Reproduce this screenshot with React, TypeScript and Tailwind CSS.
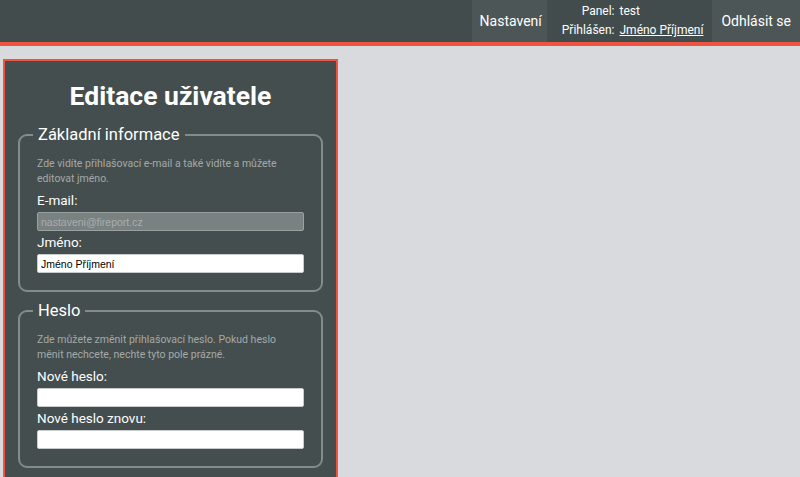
import React from "react";

const font = { fontFamily: "Roboto, 'Noto Sans', sans-serif" };
const inputFont = { fontFamily: "'Liberation Sans', Arial, sans-serif" };

function Field({ label, value, disabled, first }: { label: string; value?: string; disabled?: boolean; first?: boolean }) {
  return (
    <div className="flex flex-col">
      <label className={"text-[13.5px] leading-[16px] text-white " + (first ? "mt-[6px]" : "mt-[3px]")}>{label}</label>
      <input
        readOnly
        disabled={disabled}
        value={value ?? ""}
        style={inputFont}
        className={
          "mt-[4px] h-[19px] w-full rounded-[2px] px-[3px] text-[10.5px] outline-none " +
          (disabled
            ? "bg-[#7a8181] border border-[#9aa1a1] text-[#a9aeae]"
            : "bg-white border border-[#c9cccc] text-black")
        }
      />
    </div>
  );
}

function Section({ title, desc, children }: { title: string; desc: React.ReactNode; children: React.ReactNode }) {
  return (
    <fieldset className="border-2 border-[#838b8b] rounded-[9px] px-[17px] pb-[17px]">
      <legend className="ml-[-4px] px-[5px] text-[16.5px] leading-[22px] text-white">{title}</legend>
      <p className="mt-[10px] text-[10.5px] leading-[15px] text-[#a4a9a9]">{desc}</p>
      {children}
    </fieldset>
  );
}

export default function App() {
  return (
    <div className="min-h-[477px] w-[800px] bg-[#d9dadd]" style={font}>
      <header className="h-[46px] bg-[#434c4c] border-b-4 border-[#ef5440] flex justify-end">
        <div className="h-[42px] bg-[#4c5656] pl-[8px] pr-[5px] flex items-center text-white text-[14px] ml-auto">
          Nastavení
        </div>
        <div className="h-[42px] bg-[#434c4c] pl-[15px] pr-[9px] grid grid-cols-[auto_auto] content-center gap-x-[5px] text-white text-[12px] leading-[19px]">
          <span className="text-right">Panel:</span>
          <span>test</span>
          <span className="text-right">Přihlášen:</span>
          <span className="underline">Jméno Příjmení</span>
        </div>
        <div className="h-[42px] bg-[#4c5656] px-[9px] flex items-center text-white text-[14px]">
          Odhlásit se
        </div>
      </header>
      <main className="pt-[13px] pl-[3px]">
        <div className="w-[335px] border-2 border-[#ef5440] bg-[#444e4e] px-[13px] pt-[18px] pb-[20px] flex flex-col gap-[8px]">
          <h1 className="text-center text-white font-bold text-[26.5px] leading-[34px] mb-[3px]">Editace uživatele</h1>
          <Section
            title="Základní informace"
            desc={<>Zde vidíte přihlašovací e-mail a také vidíte a můžete editovat jméno.</>}
          >
            <Field label="E-mail:" value="nastaveni@fireport.cz" disabled first />
            <Field label="Jméno:" value="Jméno Příjmení" />
          </Section>
          <Section
            title="Heslo"
            desc={<>Zde můžete změnit přihlašovací heslo. Pokud heslo měnit nechcete, nechte tyto pole prázné.</>}
          >
            <Field label="Nové heslo:" first />
            <Field label="Nové heslo znovu:" />
          </Section>
        </div>
      </main>
    </div>
  );
}
